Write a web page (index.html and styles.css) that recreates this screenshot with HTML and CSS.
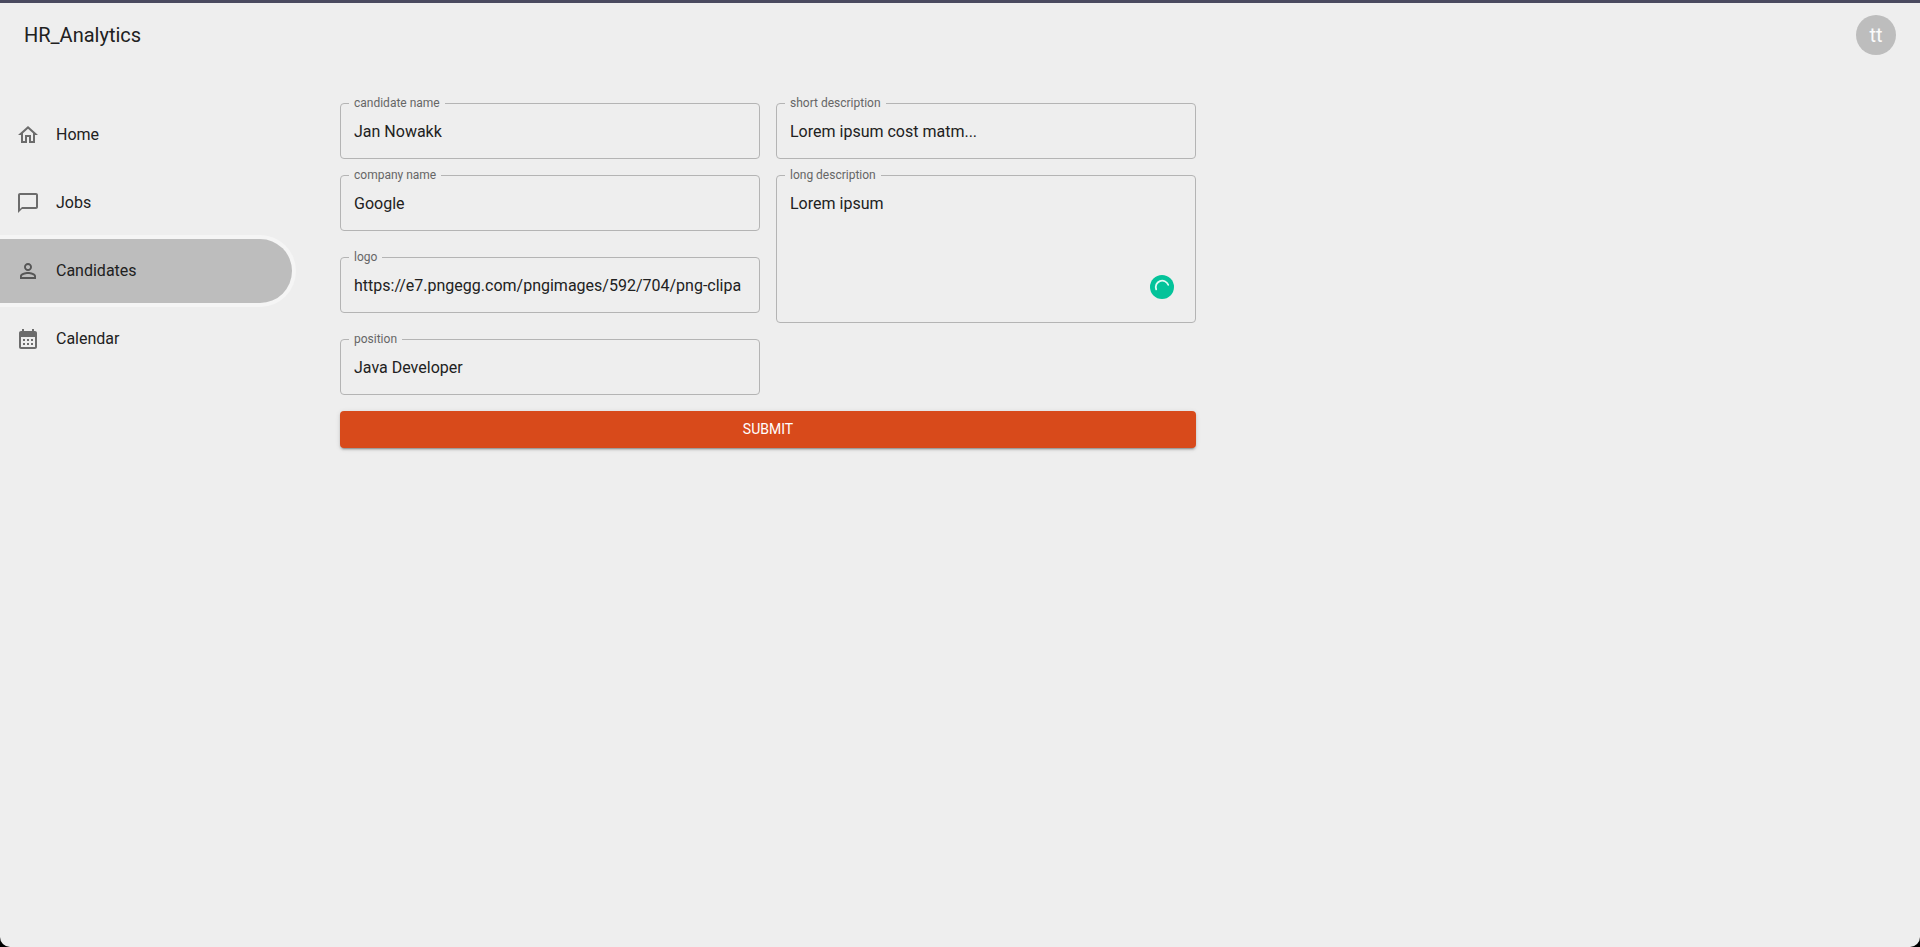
FILE: index.html
```
<!DOCTYPE html>
<html lang="en">
<head>
<meta charset="utf-8">
<meta name="viewport" content="width=device-width, initial-scale=1">
<title>HR_Analytics</title>
<link rel="stylesheet" href="styles.css">
</head>
<body>
<div class="app">
  <header class="topbar">
    <div class="brand">HR_Analytics</div>
    <button class="avatar" type="button" aria-label="Account">tt</button>
  </header>
  <div class="layout">
    <nav class="sidebar" aria-label="Main">
      <a class="nav-item" href="#home">
        <svg class="icon" viewBox="0 0 24 24" aria-hidden="true"><path d="m12 5.69 5 4.5V18h-2v-6H9v6H7v-7.81l5-4.5M12 3 2 12h3v8h6v-6h2v6h6v-8h3L12 3z"/></svg>
        <span>Home</span>
      </a>
      <a class="nav-item" href="#jobs">
        <svg class="icon" viewBox="0 0 24 24" aria-hidden="true"><path d="M20 2H4c-1.1 0-2 .9-2 2v18l4-4h14c1.1 0 2-.9 2-2V4c0-1.1-.9-2-2-2zm0 14H6l-2 2V4h16v12z"/></svg>
        <span>Jobs</span>
      </a>
      <a class="nav-item nav-item-active" href="#candidates" aria-current="page">
        <svg class="icon" viewBox="0 0 24 24" aria-hidden="true"><path d="M12 5.9c1.16 0 2.1.94 2.1 2.1s-.94 2.1-2.1 2.1S9.9 9.16 9.9 8s.94-2.1 2.1-2.1m0 9c2.97 0 6.1 1.46 6.1 2.1v1.1H5.9V17c0-.64 3.13-2.1 6.1-2.1M12 4C9.79 4 8 5.79 8 8s1.79 4 4 4 4-1.79 4-4-1.79-4-4-4zm0 9c-2.67 0-8 1.34-8 4v3h16v-3c0-2.66-5.33-4-8-4z"/></svg>
        <span>Candidates</span>
      </a>
      <a class="nav-item" href="#calendar">
        <svg class="icon" viewBox="0 0 24 24" aria-hidden="true"><path d="M19 4h-1V2h-2v2H8V2H6v2H5c-1.11 0-1.99.9-1.99 2L3 20c0 1.1.89 2 2 2h14c1.1 0 2-.9 2-2V6c0-1.1-.9-2-2-2zm0 16H5V10h14v10zM9 14H7v-2h2v2zm4 0h-2v-2h2v2zm4 0h-2v-2h2v2zm-8 4H7v-2h2v2zm4 0h-2v-2h2v2zm4 0h-2v-2h2v2z"/></svg>
        <span>Calendar</span>
      </a>
    </nav>
    <main class="content">
      <form class="form">
        <div class="field">
          <label for="candidate">candidate name</label>
          <input id="candidate" type="text" value="Jan Nowakk">
        </div>
        <div class="field">
          <label for="short">short description</label>
          <input id="short" type="text" value="Lorem ipsum cost matm...">
        </div>
        <div class="field">
          <label for="company">company name</label>
          <input id="company" type="text" value="Google">
        </div>
        <div class="field field-tall">
          <label for="long">long description</label>
          <textarea id="long" rows="5">Lorem ipsum</textarea>
          <svg class="checker" viewBox="0 0 24 24" aria-hidden="true"><circle cx="12" cy="12" r="12" fill="#04c39a"/><path d="M6.2 14.4A6.4 6.4 0 0 1 18.2 9.8" fill="none" stroke="#e2faf4" stroke-width="1.8" stroke-linecap="round"/></svg>
        </div>
        <div class="field">
          <label for="logo">logo</label>
          <input id="logo" type="text" value="https://e7.pngegg.com/pngimages/592/704/png-clipa">
        </div>
        <div class="field">
          <label for="position">position</label>
          <input id="position" type="text" value="Java Developer">
        </div>
        <button class="submit" type="submit">Submit</button>
      </form>
    </main>
  </div>
</div>
</body>
</html>
```
FILE: styles.css
```
* {
  box-sizing: border-box;
}

html {
  background: #000;
}

body {
  margin: 0;
  font: 400 16px/24px Roboto, "Liberation Sans", sans-serif;
  color: #212121;
}

.app {
  min-height: 100vh;
  background: #eee;
  border-top: 3px solid #4a4a5f;
  border-radius: 0 0 10px 10px;
}

.topbar {
  display: flex;
  align-items: center;
  justify-content: space-between;
  height: 64px;
  padding: 0 24px;
}

.brand {
  font-size: 20px;
}

.avatar {
  width: 40px;
  height: 40px;
  padding: 0;
  border: 0;
  border-radius: 50%;
  background: #bdbdbd;
  color: #fafafa;
  font: 400 20px/20px Roboto, "Liberation Sans", sans-serif;
}

.layout {
  display: flex;
  gap: 48px;
  padding-top: 36px;
}

.sidebar {
  flex: 0 0 292px;
  display: flex;
  flex-direction: column;
  gap: 4px;
}

.nav-item {
  display: flex;
  align-items: center;
  gap: 16px;
  height: 64px;
  padding: 0 16px;
  border-radius: 0 32px 32px 0;
  color: inherit;
  text-decoration: none;
}

.nav-item-active {
  background: #bdbdbd;
  box-shadow: 0 0 0 4px #f5f5f5;
}

.icon {
  width: 24px;
  height: 24px;
  fill: #000;
  opacity: 0.54;
}

.content {
  flex: 1;
  min-width: 0;
  padding-right: 24px;
}

.form {
  display: grid;
  grid-template-columns: 1fr 1fr;
  align-items: start;
  gap: 16px;
  max-width: 856px;
}

.field {
  position: relative;
  display: flex;
  padding: 16px 13px;
  border: 1px solid #b4b4b4;
  border-radius: 4px;
}

.field-tall {
  grid-row: span 2;
}

.field label {
  position: absolute;
  top: -10px;
  left: 8px;
  padding: 0 5px;
  background: #eee;
  color: #666;
  font-size: 12px;
  line-height: 18px;
}

.field input,
.field textarea {
  flex: 1;
  min-width: 0;
  margin: 0;
  padding: 0;
  border: 0;
  outline: 0;
  background: transparent;
  color: inherit;
  font: inherit;
  line-height: 23px;
  resize: none;
}

.field input {
  height: 22px;
}

.field textarea {
  height: 114px;
}

.checker {
  position: absolute;
  right: 21px;
  bottom: 23px;
  width: 24px;
  height: 24px;
}

.submit {
  grid-column: 1 / -1;
  padding: 6px 16px;
  border: 0;
  border-radius: 4px;
  background: #d84a1b;
  box-shadow: 0 3px 1px -2px rgba(0, 0, 0, 0.2), 0 2px 2px 0 rgba(0, 0, 0, 0.14), 0 1px 5px 0 rgba(0, 0, 0, 0.12);
  color: #fff;
  font: 400 14px/25px Roboto, "Liberation Sans", sans-serif;
  text-transform: uppercase;
}
```
